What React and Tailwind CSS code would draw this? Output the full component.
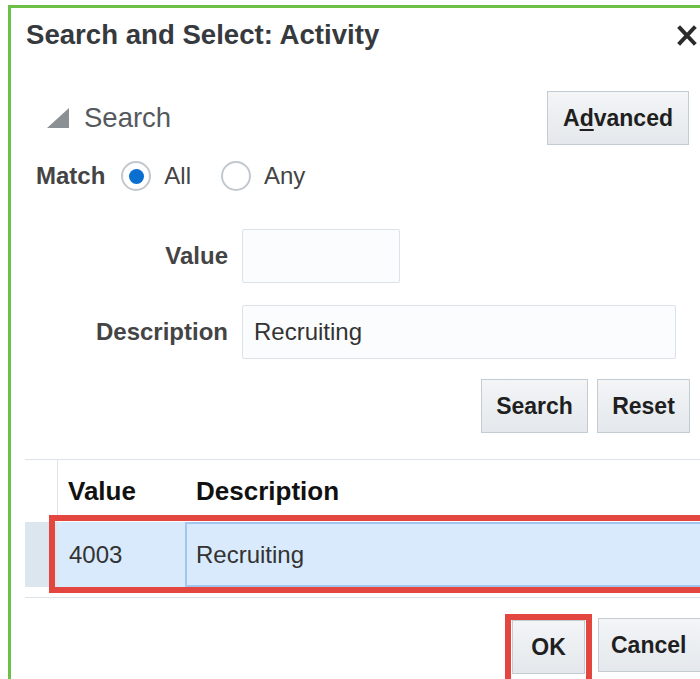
import React from "react";

function Radio({ checked }) {
  return (
    <span className="flex h-[30px] w-[30px] items-center justify-center rounded-full border-2 border-[#c2c8ce] bg-white">
      {checked && <span className="h-[15px] w-[15px] rounded-full bg-[#0a6fd1]" />}
    </span>
  );
}

function Button({ children, className = "" }) {
  return (
    <button
      className={
        "flex h-[54px] items-center justify-center border border-[#c3cbd3] bg-gradient-to-b from-[#f3f5f7] to-[#e4e8ec] text-[23px] font-bold text-[#1f1f1f] " +
        className
      }
    >
      {children}
    </button>
  );
}

export default function App() {
  return (
    <div className="h-[679px] w-[700px] overflow-hidden bg-white pl-[8px] pt-[5px] font-['Liberation_Sans',Arial,sans-serif]">
      <div className="h-[700px] w-[720px] border-l-[3px] border-t-[3px] border-[#6cc04a] bg-white">
        {/* header */}
        <div className="mt-[13px] flex h-[28px] w-[686px] items-center pl-[15px]">
          <span className="text-[27.6px] font-bold leading-[28px] text-[#363a3e]">
            Search and Select: Activity
          </span>
          <svg className="ml-auto" width="20" height="21" viewBox="0 0 20 21">
            <path d="M3 3 L17 18 M17 3 L3 18" stroke="#2b2b2b" strokeWidth="4" strokeLinecap="square" />
          </svg>
        </div>

        {/* search section header */}
        <div className="mt-[41px] flex h-[56px] w-[678px] items-center pl-[36px]">
          <svg width="22" height="20" viewBox="0 0 22 20">
            <polygon points="22,0 22,20 0,20" fill="#8b9094" />
          </svg>
          <span className="ml-[15px] text-[27.5px] leading-[28px] text-[#55595e]">Search</span>
          <Button className="ml-auto w-[142px]">
            <span>
              A<u className="underline-offset-[3px]">d</u>vanced
            </span>
          </Button>
        </div>

        {/* match */}
        <div className="mt-[15px] flex h-[30px] items-center pl-[25px] text-[24px]">
          <span className="font-bold text-[#444]">Match</span>
          <span className="ml-[16px]">
            <Radio checked />
          </span>
          <span className="ml-[13px] text-[#444]">All</span>
          <span className="ml-[30px]">
            <Radio />
          </span>
          <span className="ml-[13px] text-[#444]">Any</span>
        </div>

        {/* fields */}
        <div className="mt-[38px] flex h-[54px] items-center text-[24px]">
          <span className="w-[217px] text-right font-bold text-[#444]">Value</span>
          <div className="ml-[14px] h-[54px] w-[158px] rounded-[2px] border border-[#dde2e7] bg-[#fbfcfd]" />
        </div>
        <div className="mt-[22px] flex h-[54px] items-center text-[24px]">
          <span className="w-[217px] text-right font-bold text-[#444]">Description</span>
          <div className="ml-[14px] flex h-[54px] w-[434px] items-center rounded-[2px] border border-[#dde2e7] bg-[#fbfcfd] pl-[11px] text-[#333]">
            Recruiting
          </div>
        </div>

        {/* search / reset */}
        <div className="mt-[20px] flex w-[679px] justify-end gap-[9px]">
          <Button className="w-[107px]">Search</Button>
          <Button className="w-[93px]">Reset</Button>
        </div>

        {/* results table */}
        <div className="relative ml-[14px] mt-[26px] w-[700px]">
          <div className="flex h-[63px] border-t border-[#dde3e9]">
            <div className="w-[33px] border-r border-[#dde3e9]" />
            <div className="flex w-[127px] items-center pl-[10px] text-[26px] font-bold text-[#111]">Value</div>
            <div className="flex items-center pl-[11px] text-[26px] font-bold text-[#111]">Description</div>
          </div>
          <div className="flex h-[65px] text-[24px] text-[#333]">
            <div className="w-[33px] bg-[#dce6ef]" />
            <div className="flex w-[127px] items-center bg-[#d8eafb] pl-[11px]">4003</div>
            <div className="flex flex-1 items-center border-[2px] border-[#a3c6ef] bg-[#d8eafb] pl-[9px]">
              Recruiting
            </div>
          </div>
          <div className="mt-[10px] h-px bg-[#dde3e9]" />
          {/* highlight around the selected row */}
          <div className="pointer-events-none absolute left-[24px] top-[56px] h-[78px] w-[700px] border-[6px] border-[#e2463f]" />
        </div>

        {/* footer */}
        <div className="mt-[20px] flex items-start">
          <div className="relative ml-[501px] mt-[2px]">
            <Button className="w-[73px]">OK</Button>
            <div className="pointer-events-none absolute -left-[7px] -top-[6px] h-[80px] w-[87px] border-[6px] border-[#e2463f]" />
          </div>
          <Button className="ml-[13px] w-[112px] justify-start pl-[12px]">Cancel</Button>
        </div>
      </div>
    </div>
  );
}
